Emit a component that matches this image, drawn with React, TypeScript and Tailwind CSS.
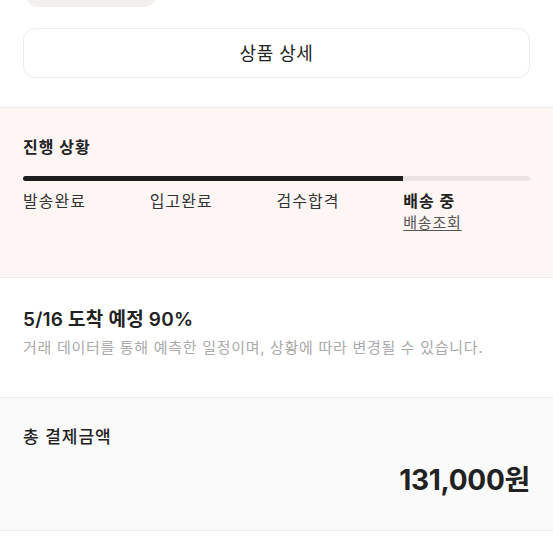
import React from "react";

export default function App() {
  const font = { fontFamily: 'Inter, "Noto Sans CJK KR", "Noto Sans", sans-serif' };
  return (
    <div className="w-[553px] h-[553px] overflow-hidden bg-white text-[#222]" style={font}>
      <div className="h-[7px] overflow-hidden pl-[25px]">
        <div className="-mt-[33px] h-[40px] w-[132px] rounded-[14px] bg-[#f2f0ee]" />
      </div>
      <div className="px-[23px] pt-[21px] pb-[29px]">
        <div className="flex h-[50px] items-center justify-center rounded-[12px] border border-[#ececec] bg-white text-[18px] tracking-[0.5px] text-[#222]">
          상품 상세
        </div>
      </div>
      <div className="border-y border-[#efeaea] bg-[#fdf6f4] px-[23px] pt-[25px] h-[171px]">
        <div className="text-[16px] font-bold leading-[28px] tracking-[1px] text-[#222]">진행 상황</div>
        <div className="mt-[15px] flex h-[5px] w-full overflow-hidden rounded-full bg-[#ebe4e2]">
          <div className="h-full w-[380px] bg-[#1e1e1e]" />
        </div>
        <div className="mt-[8px] grid grid-cols-4 text-[16px] leading-[24px] tracking-[1px]">
          <div className="text-[#333]">발송완료</div>
          <div className="text-[#333]">입고완료</div>
          <div className="text-[#333]">검수합격</div>
          <div>
            <div className="font-bold text-[#222]">배송 중</div>
            <div className="text-[15px] leading-[20px] tracking-[0.8px] text-[#555] underline underline-offset-2">배송조회</div>
          </div>
        </div>
      </div>
      <div className="h-[119px] px-[23px] pt-[30px]">
        <div className="text-[19px] font-semibold leading-[24px] tracking-[0.2px] text-[#222]">5/16 도착 예정 90%</div>
        <div className="mt-[5px] text-[15px] leading-[22px] tracking-[0.7px] text-[#aaa]">
          거래 데이터를 통해 예측한 일정이며, 상황에 따라 변경될 수 있습니다.
        </div>
      </div>
      <div className="h-[134px] border-y border-[#eeeeee] bg-[#fafafa] px-[23px] pt-[27px]">
        <div className="text-[17px] font-medium leading-[24px] tracking-[1px] text-[#222]">총 결제금액</div>
        <div className="mt-[13px] text-right text-[28px] font-bold leading-[36px] tracking-[-0.3px] text-[#222]">131,000원</div>
      </div>
    </div>
  );
}
